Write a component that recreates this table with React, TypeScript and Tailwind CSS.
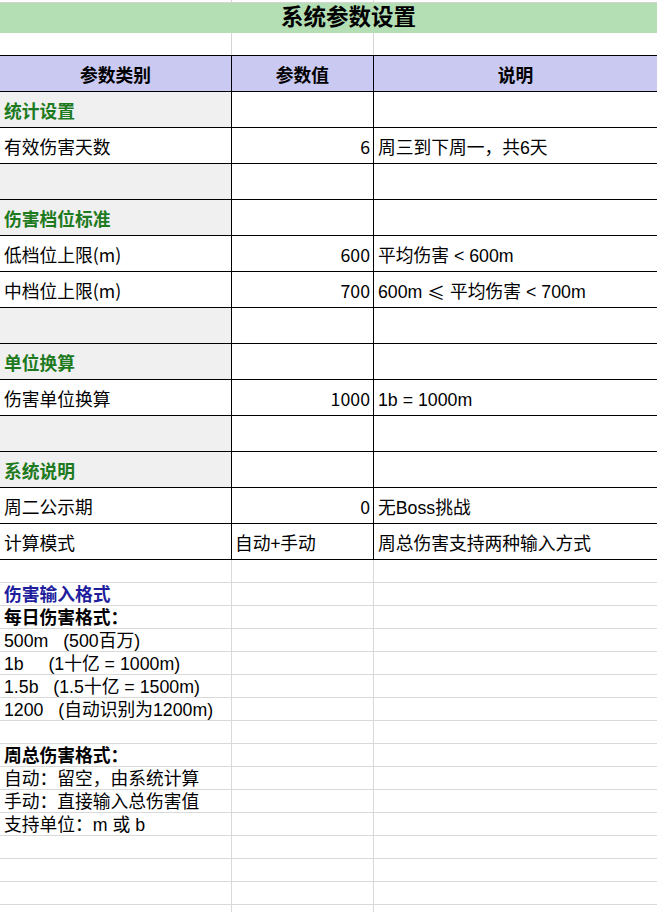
import React from 'react'

type Row =
  | { kind: 'section'; label: string }
  | { kind: 'blank' }
  | { kind: 'item'; label: string; value: string; note: React.ReactNode; left?: boolean }

const cjk = { fontFamily: '"Noto Sans CJK SC", sans-serif' }

const rows: Row[] = [
  { kind: 'section', label: '统计设置' },
  { kind: 'item', label: '有效伤害天数', value: '6', note: '周三到下周一，共6天' },
  { kind: 'blank' },
  { kind: 'section', label: '伤害档位标准' },
  { kind: 'item', label: '低档位上限(m)', value: '600', note: '平均伤害 < 600m' },
  {
    kind: 'item',
    label: '中档位上限(m)',
    value: '700',
    note: (
      <>
        600m <span style={cjk}>≤</span> 平均伤害 &lt; 700m
      </>
    ),
  },
  { kind: 'blank' },
  { kind: 'section', label: '单位换算' },
  { kind: 'item', label: '伤害单位换算', value: '1000', note: '1b = 1000m' },
  { kind: 'blank' },
  { kind: 'section', label: '系统说明' },
  { kind: 'item', label: '周二公示期', value: '0', note: '无Boss挑战' },
  { kind: 'item', label: '计算模式', value: '自动+手动', note: '周总伤害支持两种输入方式', left: true },
]

const notes: { t: string; c?: string }[] = [
  { t: '' },
  { t: '伤害输入格式', c: 'font-bold text-[#1f1f9e]' },
  { t: '每日伤害格式：', c: 'font-bold' },
  { t: '500m   (500百万)' },
  { t: '1b     (1十亿 = 1000m)' },
  { t: '1.5b   (1.5十亿 = 1500m)' },
  { t: '1200   (自动识别为1200m)' },
  { t: '' },
  { t: '周总伤害格式：', c: 'font-bold' },
  { t: '自动：留空，由系统计算' },
  { t: '手动：直接输入总伤害值' },
  { t: '支持单位：m 或 b' },
  { t: '' },
  { t: '' },
  { t: '' },
  { t: '' },
]

const grid = 'grid grid-cols-[232px_142px_283px]'

export default function App() {
  return (
    <div
      className="w-[657px] h-[912px] overflow-hidden bg-white text-black text-[17.75px] leading-none"
      style={{ fontFamily: '"Liberation Sans", "Noto Sans CJK SC", sans-serif' }}
    >
      <div className={`${grid} h-[3px] border-b border-[#d4d4d4]`}>
        <div className="border-r border-[#d4d4d4]" />
        <div className="border-r border-[#d4d4d4]" />
        <div />
      </div>
      <div className="h-[30px] bg-[#b4deb4] flex items-center justify-center pl-[40px] pt-[1px]">
        <span className="text-[22.5px] font-bold">系统参数设置</span>
      </div>
      <div className={`${grid} h-[22px]`}>
        <div className="border-r border-[#d4d4d4]" />
        <div className="border-r border-[#d4d4d4]" />
        <div />
      </div>

      <div className={`${grid} h-[37px] bg-[#c9c9f1] border-y border-black font-bold`} style={cjk}>
        <div className="border-r border-black flex items-center justify-center pt-[2px]">参数类别</div>
        <div className="border-r border-black flex items-center justify-center pt-[2px]">参数值</div>
        <div className="flex items-center justify-center pt-[2px]">说明</div>
      </div>

      {rows.map((r, i) => (
        <div key={i} className={`${grid} h-[36px] border-b border-black`}>
          {r.kind === 'section' && (
            <>
              <div className="bg-[#f0f0f0] border-r border-black flex items-center pl-[4px] pt-[3px] font-bold text-[#1e7a1e]" style={cjk}>{r.label}</div>
              <div className="border-r border-black" />
              <div />
            </>
          )}
          {r.kind === 'blank' && (
            <>
              <div className="bg-[#f0f0f0] border-r border-black" />
              <div className="border-r border-black" />
              <div />
            </>
          )}
          {r.kind === 'item' && (
            <>
              <div className="border-r border-black flex items-center pl-[4px] pt-[3px]" style={cjk}>{r.label}</div>
              <div className={`border-r border-black flex items-center pt-[3px] ${r.left ? 'pl-[3px]' : 'justify-end pr-[3px]'}`} style={cjk}>{r.value}</div>
              <div className="flex items-center pl-[4px] pt-[6px] whitespace-pre">{r.note}</div>
            </>
          )}
        </div>
      ))}

      {notes.map((n, i) => (
        <div key={i} className={`${grid} h-[23px] border-b border-[#d9d9d9]`}>
          <div className="border-r border-[#d9d9d9] relative">
            <span className={`absolute left-[4px] top-[4px] whitespace-pre ${n.c ?? ''}`}>{n.t}</span>
          </div>
          <div className="border-r border-[#d9d9d9]" />
          <div />
        </div>
      ))}
    </div>
  )
}
